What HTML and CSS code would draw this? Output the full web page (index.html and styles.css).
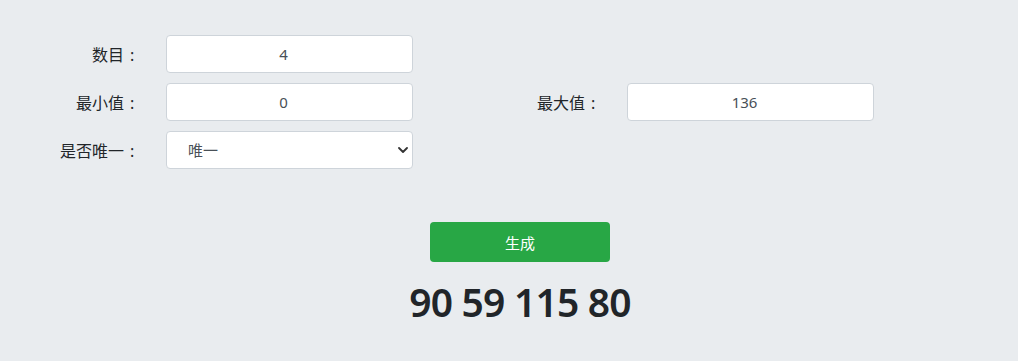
FILE: index.html
```html
<!DOCTYPE html>
<html lang="zh">
<head>
<meta charset="utf-8">
<title>随机数生成</title>
<link rel="stylesheet" href="styles.css">
</head>
<body>
<main class="page">
  <form class="form">
    <div class="row">
      <div class="field">
        <label class="label" for="count">数目<span class="colon">:</span></label>
        <input class="control" id="count" type="text" value="4">
      </div>
    </div>
    <div class="row">
      <div class="field">
        <label class="label" for="min">最小值<span class="colon">:</span></label>
        <input class="control" id="min" type="text" value="0">
      </div>
      <div class="field">
        <label class="label" for="max">最大值<span class="colon">:</span></label>
        <input class="control" id="max" type="text" value="136">
      </div>
    </div>
    <div class="row">
      <div class="field">
        <label class="label" for="unique">是否唯一<span class="colon">:</span></label>
        <div class="select-wrap">
          <select class="control select" id="unique">
            <option>唯一</option>
            <option>不唯一</option>
          </select>
          <svg class="chevron" viewBox="0 0 10 6" width="10" height="6" aria-hidden="true"><path d="M1 1 L5 5 L9 1" fill="none" stroke="#333" stroke-width="1.8" stroke-linecap="round" stroke-linejoin="round"/></svg>
        </div>
      </div>
    </div>
  </form>
  <div class="actions">
    <button class="btn" type="button">生成</button>
    <div class="result">90 59 115 80</div>
  </div>
</main>
</body>
</html>
```
FILE: styles.css
```css
* { box-sizing: border-box; }
html, body {
  margin: 0;
  background: #e9ecef;
  font-family: "Noto Sans", "Noto Sans CJK SC", sans-serif;
  color: #212529;
}
.page {
  padding-top: 35px;
}
.form {
  display: flex;
  flex-direction: column;
  gap: 10px;
  padding-left: 30px;
}
.row {
  display: flex;
  gap: 78px;
}
.field {
  display: grid;
  grid-template-columns: 110px 247px;
  column-gap: 26px;
  align-items: center;
}
.label {
  text-align: right;
  font-size: 16px;
  color: #212529;
  white-space: nowrap;
}
.colon {
  display: inline-block;
  width: 16px;
  padding-left: 6px;
  text-align: left;
}
.control {
  display: block;
  width: 247px;
  height: 38px;
  border: 1px solid #ced4da;
  border-radius: 4px;
  background: #fff;
  color: #495057;
  font-family: "Noto Sans", "Noto Sans CJK SC", sans-serif;
  font-size: 15px;
  text-align: center;
  padding: 0 24px 0 12px;
  outline: none;
}
.select-wrap {
  position: relative;
  width: 247px;
}
.select {
  appearance: none;
  -webkit-appearance: none;
  text-align: left;
  font-size: 15px;
  padding-left: 21px;
}
.chevron {
  position: absolute;
  right: 5px;
  top: 16px;
}
.actions {
  display: flex;
  flex-direction: column;
  align-items: center;
  padding-left: 22px;
  padding-top: 53px;
}
.btn {
  width: 180px;
  height: 40px;
  border: none;
  border-radius: 4px;
  background: #28a745;
  color: #fff;
  font-family: "Noto Sans", "Noto Sans CJK SC", sans-serif;
  font-size: 15px;
}
.result {
  margin-top: 16px;
  font-size: 39px;
  font-weight: 600;
  letter-spacing: -0.8px;
  line-height: 48px;
  color: #212529;
}
```
